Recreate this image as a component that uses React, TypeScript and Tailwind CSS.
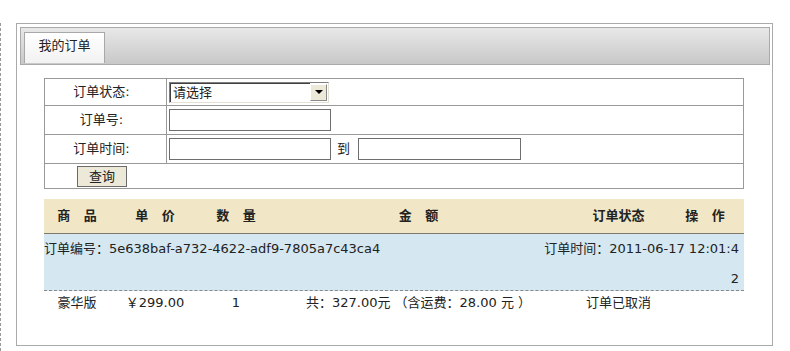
import React from "react";

const font = { fontFamily: '"DejaVu Sans", "Noto Sans CJK SC", sans-serif' };

function FakeInput({ w }: { w: string }) {
  return <div className={`${w} h-[22px] border border-[#6e6e6e] bg-white`} />;
}

export default function App() {
  const cols = "grid grid-cols-[66px_90px_72px_293px_107px_66px]";

  return (
    <div className="w-[790px] h-[351px] bg-white text-[13px] text-[#222] overflow-hidden" style={font}>
      <div className="mt-[23px] h-[328px] border-l border-dashed border-[#999] pl-[15px]">
        <div className="w-[757px] h-[323px] border border-[#aaa] bg-white">
          {/* tab bar */}
          <div className="ml-[3px] mr-[2px] mt-[3px] h-[38px] border border-[#aaa] bg-gradient-to-b from-[#e8e8e8] to-[#c8c8c8] pl-[3px] pt-[4px]">
            <div className="w-[81px] h-[31px] border-t border-l border-r border-[#a8a8a8] bg-gradient-to-b from-white to-[#f2f2f2] flex items-center justify-center pb-[4px]">
              我的订单
            </div>
          </div>

          <div className="px-[27px] mt-[13px]">
            {/* search form */}
            <div className="w-[700px] border border-[#999]">
              <div className="flex h-[26px]">
                <div className="w-[122px] border-r border-[#999] flex items-center justify-center pr-[8px]">订单状态:</div>
                <div className="flex items-center pl-[2px]">
                  <div className="w-[160px] h-[21px] flex border border-[#7f7f7f] border-b-[#e4e1d4] border-r-[#e4e1d4] bg-white">
                    <div className="flex-1 border-t border-l border-[#404040] pl-[2px] leading-[18px]">请选择</div>
                    <div className="w-[17px] h-[17px] mt-[1px] mr-[1px] bg-[#ece9d8] border border-[#fff] border-b-[#8a8a8a] border-r-[#8a8a8a] flex items-center justify-center">
                      <div className="w-0 h-0 border-l-[4px] border-r-[4px] border-t-[4px] border-l-transparent border-r-transparent border-t-black" />
                    </div>
                  </div>
                </div>
              </div>
              <div className="flex h-[29px] border-t border-[#999]">
                <div className="w-[122px] border-r border-[#999] flex items-center justify-center pr-[8px]">订单号:</div>
                <div className="flex items-center pl-[2px]">
                  <FakeInput w="w-[162px]" />
                </div>
              </div>
              <div className="flex h-[29px] border-t border-[#999]">
                <div className="w-[122px] border-r border-[#999] flex items-center justify-center pr-[8px]">订单时间:</div>
                <div className="flex items-center pl-[2px]">
                  <FakeInput w="w-[162px]" />
                  <span className="ml-[6px] mr-[8px]">到</span>
                  <FakeInput w="w-[163px]" />
                </div>
              </div>
              <div className="flex h-[25px] border-t border-[#999] pl-[32px] pt-[2px]">
                <button className="w-[50px] h-[21px] border border-[#6a6a6a] bg-[#ece9d8] leading-[19px] text-[13px]">查询</button>
              </div>
            </div>

            {/* order list header */}
            <div className={`${cols} w-[700px] mt-[10px] h-[35px] bg-[#f1e7c6] border-b border-[#7d7a6c] font-bold items-center text-center [word-spacing:9px]`}>
              <div>商 品</div>
              <div>单 价</div>
              <div>数 量</div>
              <div>金 额</div>
              <div className="[word-spacing:0px]">订单状态</div>
              <div>操 作</div>
            </div>

            {/* order block */}
            <div className="w-[700px] h-[57px] bg-[#d5e7f1] border-b border-dashed border-[#888] flex justify-between leading-[30px]">
              <div>订单编号：5e638baf-a732-4622-adf9-7805a7c43ca4</div>
              <div className="text-right pr-[5px]">
                订单时间：2011-06-17 12:01:4
                <br />2
              </div>
            </div>
            <div className={`${cols} w-[700px] h-[24px] items-center text-center`}>
              <div>豪华版</div>
              <div>￥299.00</div>
              <div>1</div>
              <div>共：327.00元 （含运费：28.00 元 ）</div>
              <div>订单已取消</div>
              <div />
            </div>
          </div>
        </div>
      </div>
    </div>
  );
}
